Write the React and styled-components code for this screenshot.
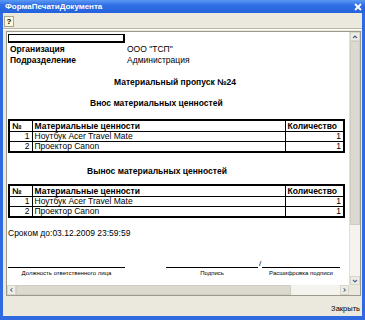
import React from "react";
import styled, { createGlobalStyle } from "styled-components";

const GlobalStyle = createGlobalStyle`
  html, body { margin: 0; padding: 0; }
  body {
    width: 365px;
    height: 320px;
    overflow: hidden;
    font-family: "Liberation Sans", Arial, sans-serif;
  }
`;

const Window = styled.div`
  width: 365px;
  height: 320px;
  display: flex;
  flex-direction: column;
  background: #2f6ae0;
`;

const TitleBar = styled.div`
  height: 13px;
  flex: none;
  display: flex;
  align-items: center;
  justify-content: space-between;
  padding: 0 3px 0 5px;
  background: linear-gradient(180deg, #5b9af4 0%, #2f6ee4 40%, #2563dc 100%);
  color: #fff;
  font-size: 8px;
  font-weight: bold;
`;

const Frame = styled.div`
  flex: 1;
  min-height: 0;
  display: flex;
  flex-direction: column;
  background: #ebe9dd;
  margin: 0 3px 4px 3px;
`;

const Toolbar = styled.div`
  height: 14px;
  flex: none;
  display: flex;
  align-items: center;
  padding: 1px 0 0 1px;
  border-bottom: 1px solid #b9b6a8;
  box-shadow: 0 1px 0 #fff;
  margin-bottom: 2px;
`;

const HelpButton = styled.div`
  width: 8px;
  height: 9px;
  border: 1px solid #a8a590;
  background: #fbf8dc;
  font-size: 8px;
  font-weight: bold;
  line-height: 9px;
  text-align: center;
  color: #000;
`;

const DocArea = styled.div`
  flex: 1;
  min-height: 0;
  margin: 0 1px 0 3px;
  border: 1px solid #9c9a8c;
  display: grid;
  grid-template-columns: minmax(0, 1fr) 11px;
  grid-template-rows: minmax(0, 1fr) 10px;
  background: #fff;
`;

const Page = styled.div`
  overflow: hidden;
  min-height: 0;
  padding: 2px 0 0 1px;
  font-size: 8.5px;
  color: #000;
`;

const EmptyBox = styled.div`
  width: 114px;
  height: 6px;
  border: 1px solid #000;
  border-right-width: 2px;
  border-bottom-width: 2px;
`;

const InfoRow = styled.div`
  display: grid;
  grid-template-columns: 119px 1fr;
  height: 11px;
  line-height: 11px;
  margin-top: ${(p) => p.$top || 0}px;
  font-size: 8.5px;
`;

const Label = styled.span`
  font-weight: bold;
  padding-left: 2px;
`;

const Heading = styled.div`
  height: 11px;
  line-height: 11px;
  font-weight: bold;
  font-size: 8.5px;
  margin-top: ${(p) => p.$top}px;
  padding-left: ${(p) => p.$left}px;
  white-space: nowrap;
`;

const Table = styled.table`
  width: 335px;
  margin-top: ${(p) => p.$top}px;
  border-collapse: collapse;
  table-layout: fixed;
  border: 2px solid #000;
  font-size: 8.5px;
`;

const Th = styled.th`
  height: 10px;
  padding: 0 2px;
  text-align: left;
  font-weight: bold;
  border: 1.5px solid #000;
  line-height: 10px;
  white-space: nowrap;
`;

const Td = styled.td`
  height: 9px;
  padding: 0 2px;
  line-height: 9px;
  border: 1px solid #000;
  text-align: ${(p) => (p.$right ? "right" : "left")};
  white-space: nowrap;
`;

const Deadline = styled.div`
  margin-top: 10px;
  height: 11px;
  line-height: 11px;
  font-size: 8.5px;
`;

const SignRow = styled.div`
  display: flex;
  align-items: flex-end;
  margin-top: 28px;
`;

const SignCell = styled.div`
  width: ${(p) => p.$w}px;
  margin-left: ${(p) => p.$ml || 0}px;
  display: flex;
  flex-direction: column;
  align-items: stretch;
`;

const SignLine = styled.div`
  border-top: 1px solid #000;
`;

const SignCaption = styled.div`
  margin-top: 2px;
  font-size: 6px;
  line-height: 7px;
  text-align: center;
  white-space: nowrap;
  color: #000;
`;

const Slash = styled.div`
  width: 4px;
  font-size: 8px;
  line-height: 8px;
  align-self: flex-start;
  margin-top: -7px;
  text-align: center;
`;

const VScroll = styled.div`
  display: flex;
  flex-direction: column;
  min-height: 0;
  background: #f4f3ee;
  border-left: 1px solid #e2e0d6;
`;

const HScroll = styled.div`
  display: flex;
  background: #f4f3ee;
`;

const Corner = styled.div`
  background: #ebe9dd;
`;

const ArrowBtn = styled.div`
  flex: none;
  width: ${(p) => (p.$h ? 9 : 10)}px;
  height: ${(p) => (p.$h ? 10 : 9)}px;
  display: flex;
  align-items: center;
  justify-content: center;
  background: #eeede5;
  border: 1px solid #d8d6ca;
  box-sizing: border-box;
`;

const Thumb = styled.div`
  flex: none;
  background: #dcdad0;
  border: 1px solid #cfcdc1;
  box-sizing: border-box;
`;

const Track = styled.div`
  flex: 1;
`;

const Footer = styled.div`
  flex: none;
  height: 20px;
  box-sizing: border-box;
  display: flex;
  align-items: flex-end;
  justify-content: flex-end;
  padding: 0 2px 3px 0;
  font-size: 7.5px;
  color: #000;
`;

function Chevron({ dir }) {
  const pts = {
    up: "2,5 4,3 6,5",
    down: "2,3 4,5 6,3",
    left: "5,2 3,4 5,6",
    right: "3,2 5,4 3,6",
  }[dir];
  return (
    <svg width="8" height="8" viewBox="0 0 8 8">
      <polyline points={pts} fill="none" stroke="#4d6185" strokeWidth="1.2" />
    </svg>
  );
}

function CloseIcon() {
  return (
    <svg width="8" height="8" viewBox="0 0 8 8">
      <path d="M1 1 L7 7 M7 1 L1 7" stroke="#fff" strokeWidth="1.8" />
    </svg>
  );
}

const items = [
  { n: 1, name: "Ноутбук Acer Travel Mate", qty: 1 },
  { n: 2, name: "Проектор Canon", qty: 1 },
];

function GoodsTable({ top }) {
  return (
    <Table $top={top}>
      <colgroup>
        <col style={{ width: 23 }} />
        <col style={{ width: 253 }} />
        <col style={{ width: 59 }} />
      </colgroup>
      <thead>
        <tr>
          <Th>№</Th>
          <Th>Материальные ценности</Th>
          <Th>Количество</Th>
        </tr>
      </thead>
      <tbody>
        {items.map((it) => (
          <tr key={it.n}>
            <Td $right>{it.n}</Td>
            <Td>{it.name}</Td>
            <Td $right>{it.qty}</Td>
          </tr>
        ))}
      </tbody>
    </Table>
  );
}

export default function App() {
  return (
    <>
      <GlobalStyle />
      <Window>
        <TitleBar>
          <span>ФормаПечатиДокумента</span>
          <CloseIcon />
        </TitleBar>
        <Frame>
          <Toolbar>
            <HelpButton>?</HelpButton>
          </Toolbar>
          <DocArea>
            <Page>
              <EmptyBox />
              <InfoRow $top={1}>
                <Label>Организация</Label>
                <span>ООО "ТСП"</span>
              </InfoRow>
              <InfoRow>
                <Label>Подразделение</Label>
                <span>Администрация</span>
              </InfoRow>
              <Heading $top={11} $left={106}>Материальный пропуск №24</Heading>
              <Heading $top={10} $left={82}>Внос материальных ценностей</Heading>
              <GoodsTable top={10} />
              <Heading $top={13} $left={79}>Вынос материальных ценностей</Heading>
              <GoodsTable top={7} />
              <Deadline>Сроком до:03.12.2009 23:59:59</Deadline>
              <SignRow>
                <SignCell $w={117}>
                  <SignLine />
                  <SignCaption>Должность ответственного лица</SignCaption>
                </SignCell>
                <SignCell $w={92} $ml={41}>
                  <SignLine />
                  <SignCaption>Подпись</SignCaption>
                </SignCell>
                <Slash>/</Slash>
                <SignCell $w={78}>
                  <SignLine />
                  <SignCaption>Расшифровка подписи</SignCaption>
                </SignCell>
              </SignRow>
            </Page>
            <VScroll>
              <ArrowBtn>
                <Chevron dir="up" />
              </ArrowBtn>
              <Thumb style={{ height: 184 }} />
              <Track />
              <ArrowBtn>
                <Chevron dir="down" />
              </ArrowBtn>
            </VScroll>
            <HScroll>
              <ArrowBtn $h>
                <Chevron dir="left" />
              </ArrowBtn>
              <Thumb style={{ width: 275 }} />
              <Track />
              <ArrowBtn $h>
                <Chevron dir="right" />
              </ArrowBtn>
            </HScroll>
            <Corner />
          </DocArea>
          <Footer>Закрыть</Footer>
        </Frame>
      </Window>
    </>
  );
}
